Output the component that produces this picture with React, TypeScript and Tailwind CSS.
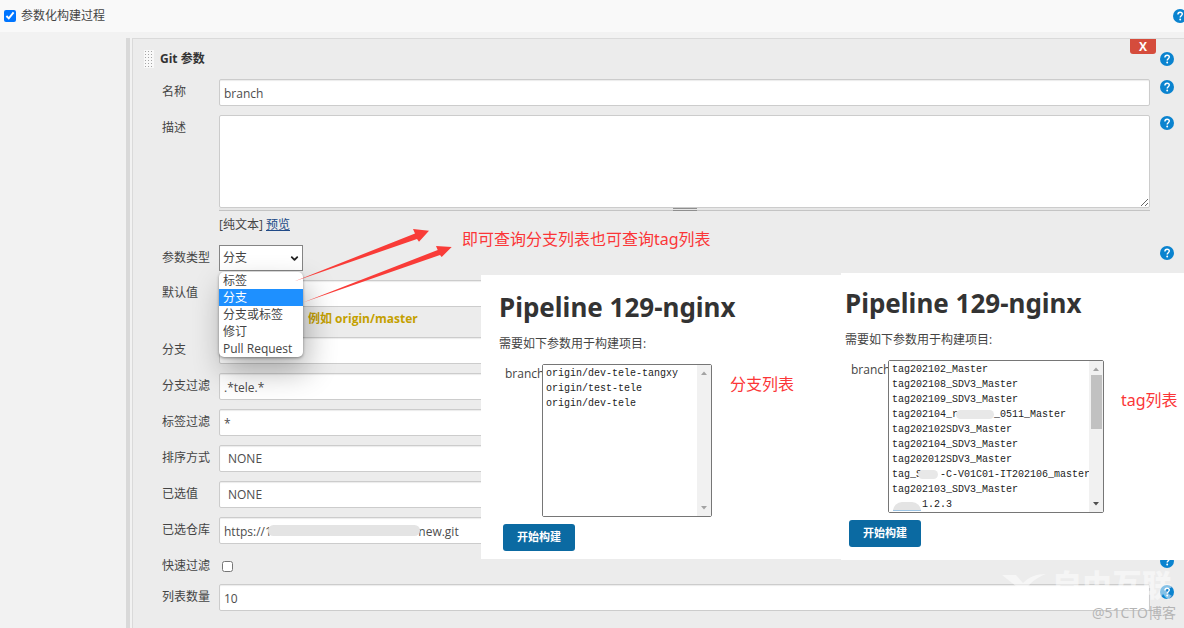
import type { ReactNode } from "react";
import { ChevronDown } from "lucide-react";

const fieldClass =
  "block h-[27px] w-full appearance-none rounded-[2px] border border-[#ccc] bg-white px-1 pt-px text-xs text-[#4d4d4d] shadow-[inset_0_1px_1px_rgba(0,0,0,0.08)] outline-none";

const paramTypes = ["标签", "分支", "分支或标签", "修订", "Pull Request"];

const branches = ["origin/dev-tele-tangxy", "origin/test-tele", "origin/dev-tele"];

const gap = (count: number) => "\u00a0".repeat(count);

const tags = [
  "tag202102_Master",
  "tag202108_SDV3_Master",
  "tag202109_SDV3_Master",
  `tag202104_r${gap(6)}_0511_Master`,
  "tag202102SDV3_Master",
  "tag202104_SDV3_Master",
  "tag202012SDV3_Master",
  `tag_S${gap(3)}-C-V01C01-IT202106_master`,
  "tag202103_SDV3_Master",
  `${gap(5)}1.2.3`,
];

function HelpButton() {
  return (
    <button type="button" aria-label="帮助" className="block size-[14px] shrink-0">
      <svg viewBox="0 0 14 14" className="size-full">
        <circle cx="7" cy="7" r="7" fill="#0a83cf" />
        <path
          d="M4.9 5.4C4.9 4 5.8 3.2 7.1 3.2c1.3 0 2.2.8 2.2 1.9 0 1.5-2.1 1.7-2.1 3.3"
          fill="none"
          stroke="#fff"
          strokeWidth="1.4"
        />
        <circle cx="7.2" cy="10.5" r="0.95" fill="#fff" />
      </svg>
    </button>
  );
}

interface RowProps {
  label: string;
  id: string;
  help?: boolean;
  children: ReactNode;
}

function Row({ label, id, help, children }: RowProps) {
  return (
    <div className="flex items-start">
      <label htmlFor={id} className="h-[22px] w-[57px] shrink-0 leading-[26px]">
        {label}
      </label>
      <div className="min-w-0 flex-1">{children}</div>
      <div className="w-6 shrink-0 pt-px pl-[10px]">{help && <HelpButton />}</div>
    </div>
  );
}

interface BuildCardProps {
  id: string;
  options: string[];
  listClass: string;
  scrollable?: boolean;
  note: string;
  noteClass: string;
  children?: ReactNode;
}

function BuildCard(props: BuildCardProps) {
  const { id, options, listClass, scrollable, note, noteClass, children } = props;

  return (
    <>
      <h1 className="font-['Noto_Sans',sans-serif] text-[26px] leading-8 font-bold text-[#333]">
        Pipeline 129-nginx
      </h1>
      <p className="mt-[11px] leading-5">需要如下参数用于构建项目:</p>
      <div className="mt-[10px] flex items-start pl-[6px]">
        <label htmlFor={id} className="w-[37px] shrink-0 leading-5">
          branch
        </label>
        <div
          className={`relative flex h-[153px] shrink-0 rounded-[2px] border border-[#767676] bg-white ${listClass}`}
        >
          <select
            id={id}
            multiple
            className="h-full min-w-0 flex-1 overflow-hidden bg-white p-0 pt-[3px] pl-px font-['Liberation_Mono',monospace] text-[10px] text-[#222] outline-none"
          >
            {options.map((option) => (
              <option key={option} className="h-[15px] min-h-[15px] px-[2px] py-0 leading-[15px]">
                {option}
              </option>
            ))}
          </select>
          <div className="flex w-[14px] shrink-0 flex-col items-center justify-between bg-[#f1f1f1] py-[6px]">
            <svg viewBox="0 0 6 4" className="h-1 w-[6px]">
              <path d="M0 4L3 0.5L6 4Z" fill="#a3a3a3" />
            </svg>
            {scrollable && <div className="mt-1 mb-auto h-[54px] w-[11px] bg-[#c1c1c1]" />}
            <svg viewBox="0 0 6 4" className="h-1 w-[6px]">
              <path d="M0 0L3 3.5L6 0Z" fill={scrollable ? "#505050" : "#a3a3a3"} />
            </svg>
          </div>
          {children}
        </div>
        <p
          className={`font-['Noto_Sans','Noto_Sans_CJK_SC',sans-serif] text-base leading-6 whitespace-nowrap text-[#fb3638] ${noteClass}`}
        >
          {note}
        </p>
      </div>
      <button
        type="button"
        className="mt-[7px] ml-1 block h-[27px] w-[72px] rounded-[3px] bg-[#0b6aa2] text-[11px] font-bold text-white"
      >
        开始构建
      </button>
    </>
  );
}

function Arrows() {
  return (
    <svg
      viewBox="0 0 170 80"
      className="pointer-events-none absolute top-[228px] left-[290px] z-20 h-20 w-[170px]"
      fill="#f93c38"
    >
      <path d="M4 53.5L125 5.5L123 1L139 2.7L129 13.7L127 11L4 53.5Z" />
      <path d="M13 74.5L147.7 22L146 18L161.7 19L151.7 29L150 27L13 74.5Z" />
    </svg>
  );
}

function Watermark() {
  return (
    <div className="pointer-events-none absolute top-[567px] right-2 text-right">
      <div className="flex items-center justify-end gap-1 pr-1 text-white/50">
        <svg viewBox="0 0 46 30" className="h-[30px] w-[46px]" fill="currentColor">
          <path d="M0 5H14L21 13C27 7 34 4 44 4C34 8 28 13 24 19L17 27H6L15 17Z" />
        </svg>
        <span className="text-[30px] leading-9 font-black">自由互联</span>
      </div>
      <p className="text-sm leading-5 text-[#b4b4b4]">@51CTO博客</p>
    </div>
  );
}

export default function App() {
  return (
    <div className="relative flex min-h-screen flex-col overflow-hidden bg-[#f2f2f2] font-['Open_Sans','Noto_Sans_CJK_SC',sans-serif] text-xs text-[#444]">
      <div className="flex h-8 items-center overflow-hidden bg-[#f9f9f9] pl-1">
        <input
          id="parameterized"
          type="checkbox"
          defaultChecked
          className="size-3 accent-[#0075ff]"
        />
        <label htmlFor="parameterized" className="ml-[5px] flex-1">
          参数化构建过程
        </label>
        <div className="-mr-[3px]">
          <HelpButton />
        </div>
      </div>

      <div className="flex flex-1 pt-[6px] pl-[126px]">
        <div className="w-1 shrink-0 bg-[#d9d9d9]" />
        <section className="relative ml-[2px] min-w-0 flex-1 border-t border-l border-[#dadada] bg-[#ececec] pr-[10px] pb-4 pl-[11px]">
          <button
            type="button"
            aria-label="删除"
            className="absolute top-0 right-7 h-[15px] w-[26px] rounded-b-[3px] bg-[#d54c3c] text-xs leading-[15px] font-bold text-white"
          >
            X
          </button>
          <div className="flex h-10 items-center">
            <svg viewBox="0 0 10 18" className="h-[18px] w-[10px]">
              <defs>
                <pattern id="grip" width="3" height="3" patternUnits="userSpaceOnUse">
                  <rect width="3" height="3" fill="#f8f8f8" />
                  <rect width="1" height="1" x="1" y="1" fill="#a5a5a5" />
                </pattern>
              </defs>
              <rect width="10" height="18" fill="url(#grip)" />
            </svg>
            <h2 className="ml-[6px] flex-1 font-bold text-[#333]">Git 参数</h2>
            <HelpButton />
          </div>

          <form className="flex flex-col gap-[9px] pl-[18px]">
            <Row label="名称" id="name" help>
              <input id="name" defaultValue="branch" className={fieldClass} />
            </Row>
            <Row label="描述" id="description" help>
              <textarea
                id="description"
                className="block h-[93px] w-full resize-y rounded-[2px] border border-[#ccc] bg-white p-1 outline-none"
              />
              <div className="flex h-[3px] items-center justify-center border-b border-[#c4c4c4] bg-[#e6e6e6]">
                <div className="h-[3px] w-6 border-y border-[#8f8f8f]" />
              </div>
              <p className="h-[25px] leading-[27px]">
                [纯文本]{" "}
                <a href="#preview" className="text-[#204a87] underline">
                  预览
                </a>
              </p>
            </Row>
            <Row label="参数类型" id="type" help>
              <div className="relative w-[84px]">
                <select
                  id="type"
                  defaultValue="分支"
                  className="block h-[26px] w-full appearance-none border border-[#858585] bg-white px-[3px] outline-none"
                >
                  {paramTypes.map((type) => (
                    <option key={type}>{type}</option>
                  ))}
                </select>
                <ChevronDown
                  className="pointer-events-none absolute top-2 right-[3px] size-[11px] text-[#222]"
                  strokeWidth={4}
                />
                <ul className="absolute top-[27px] left-0 z-10 w-[84px] overflow-hidden rounded-[5px] bg-white shadow-[4px_14px_30px_rgba(0,0,0,0.3),0_1px_3px_rgba(0,0,0,0.4)]">
                  {paramTypes.map((type) => (
                    <li
                      key={type}
                      className={`h-[17px] pl-1 leading-[17px] whitespace-nowrap ${
                        type === "分支" ? "bg-[#1e90ff] text-white" : ""
                      }`}
                    >
                      {type}
                    </li>
                  ))}
                </ul>
              </div>
            </Row>
            <Row label="默认值" id="default">
              <input id="default" className={fieldClass} />
              <p className="h-[21px] pl-[89px] leading-[23px] font-bold text-[#c4a000]">
                例如 origin/master
              </p>
            </Row>
            <Row label="分支" id="branch">
              <input id="branch" className={fieldClass} />
            </Row>
            <Row label="分支过滤" id="branch-filter">
              <input id="branch-filter" defaultValue=".*tele.*" className={fieldClass} />
            </Row>
            <Row label="标签过滤" id="tag-filter">
              <input id="tag-filter" defaultValue="*" className={fieldClass} />
            </Row>
            <Row label="排序方式" id="sort">
              <select id="sort" className={`${fieldClass} pl-2`}>
                <option>NONE</option>
              </select>
            </Row>
            <Row label="已选值" id="selected">
              <select id="selected" className={`${fieldClass} pl-2`}>
                <option>NONE</option>
              </select>
            </Row>
            <Row label="已选仓库" id="repo">
              <div className="relative">
                <input
                  id="repo"
                  defaultValue={`https://1${gap(47)}new.git`}
                  className={fieldClass}
                />
                <div className="absolute top-[8px] left-[49px] h-[11px] w-[152px] rounded-full bg-[#e4e4e4]" />
              </div>
            </Row>
            <Row label="快速过滤" id="quick-filter" help>
              <div className="flex h-[22px] items-end pb-[3px] pl-[3px]">
                <input id="quick-filter" type="checkbox" className="size-[11px]" />
              </div>
            </Row>
            <Row label="列表数量" id="list-size" help>
              <input id="list-size" defaultValue="10" className={fieldClass} />
            </Row>
          </form>
        </section>
      </div>

      <div className="absolute top-[273px] right-0 left-[481px] flex items-start">
        <div className="mt-[2px] h-[284px] w-[360px] shrink-0 bg-white pt-4 pl-[18px]">
          <BuildCard
            id="branch-list"
            options={branches}
            listClass="w-[170px]"
            note="分支列表"
            noteClass="mt-2 ml-[18px]"
          />
        </div>
        <div className="h-[287px] min-w-0 flex-1 bg-white pt-[14px] pl-1">
          <BuildCard
            id="tag-list"
            options={tags}
            listClass="w-[216px]"
            scrollable
            note="tag列表"
            noteClass="mt-7 ml-[17px]"
          >
            <div className="absolute top-[49px] left-[67px] h-[9px] w-[38px] rounded-full bg-[#e8e8e8]" />
            <div className="absolute top-[109px] left-[29px] h-[9px] w-5 rounded-full bg-[#e8e8e8]" />
            <div className="absolute top-[141px] left-1 h-[9px] w-7 rounded-t-full border-b border-[#9cc4e4] bg-[#e4e4e4]" />
          </BuildCard>
        </div>
      </div>

      <p className="absolute top-[227px] left-[462px] font-['Noto_Sans','Noto_Sans_CJK_SC',sans-serif] text-base leading-6 text-[#fb3638]">
        即可查询分支列表也可查询tag列表
      </p>
      <Arrows />
      <Watermark />
    </div>
  );
}
